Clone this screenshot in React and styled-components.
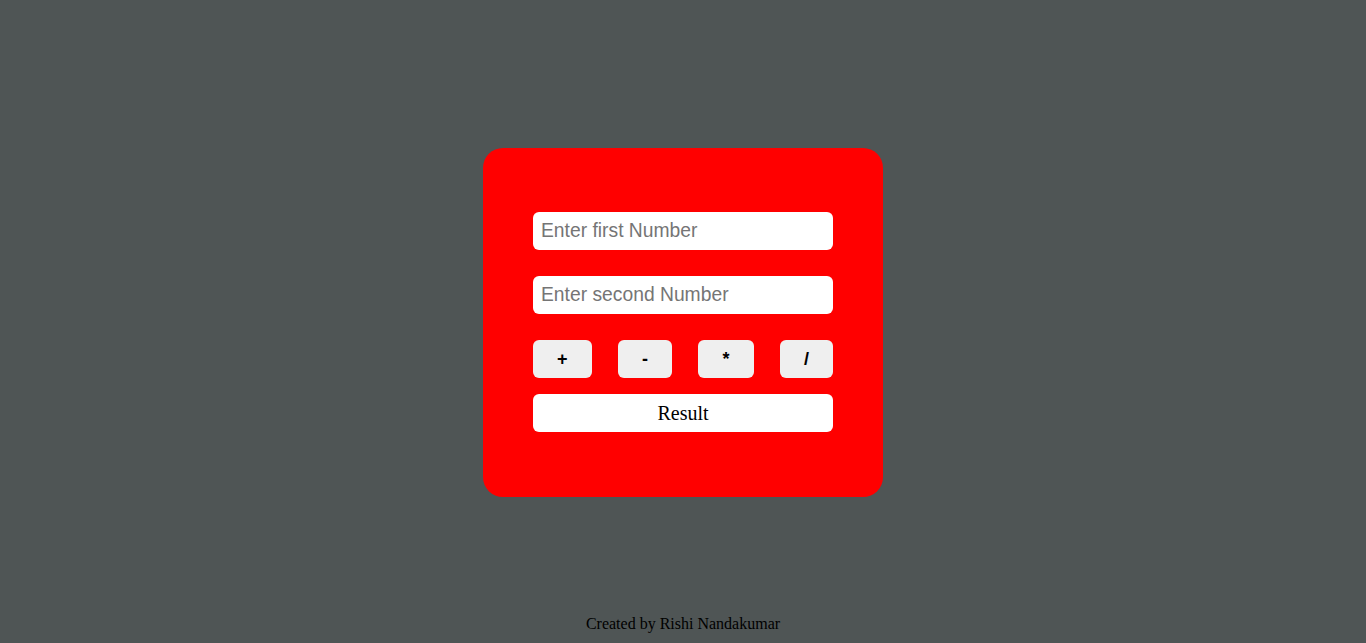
import React, { useState } from 'react';
import styled, { createGlobalStyle } from 'styled-components';

const GlobalStyle = createGlobalStyle`
  html, body {
    margin: 0;
    padding: 0;
    height: 100%;
  }
  body {
    background: #4f5555;
    font-family: "Liberation Serif", "Times New Roman", serif;
  }
`;

const Page = styled.div`
  height: 643px;
  box-sizing: border-box;
  padding-top: 2px;
  display: flex;
  flex-direction: column;
  align-items: center;
  justify-content: center;
  position: relative;
`;

const Card = styled.div`
  width: 400px;
  height: 349px;
  box-sizing: border-box;
  padding: 64px 50px;
  background: #ff0000;
  border-radius: 20px;
  display: flex;
  flex-direction: column;
`;

const Input = styled.input`
  width: 300px;
  height: 38px;
  box-sizing: border-box;
  border: none;
  border-radius: 6px;
  padding: 0 8px;
  margin-bottom: 26px;
  font-family: "Liberation Sans", Arial, sans-serif;
  font-size: 19.3px;
  outline: none;
  &::placeholder {
    color: #757575;
  }
`;

const OpRow = styled.div`
  display: flex;
  justify-content: space-between;
  margin-bottom: 16px;
`;

const OpButton = styled.button`
  height: 38px;
  padding: 0 24px;
  border: none;
  border-radius: 6px;
  background: #efefef;
  font-family: "Liberation Sans", Arial, sans-serif;
  font-weight: bold;
  font-size: 18px;
  color: #000;
  cursor: pointer;
`;

const Result = styled.div`
  height: 38px;
  border-radius: 6px;
  background: #fff;
  display: flex;
  align-items: center;
  justify-content: center;
  font-size: 20px;
  color: #000;
`;

const Footer = styled.div`
  position: absolute;
  bottom: 10px;
  left: 0;
  right: 0;
  text-align: center;
  font-size: 16px;
  color: #000;
`;

const App = () => {
  const [a, setA] = useState('');
  const [b, setB] = useState('');
  const [result, setResult] = useState('Result');

  const calc = (op) => {
    const x = parseFloat(a);
    const y = parseFloat(b);
    if (isNaN(x) || isNaN(y)) return;
    const r = { '+': x + y, '-': x - y, '*': x * y, '/': x / y }[op];
    setResult(String(r));
  };

  return (
    <Page>
      <GlobalStyle />
      <Card>
        <Input placeholder="Enter first Number" value={a} onChange={(e) => setA(e.target.value)} />
        <Input placeholder="Enter second Number" value={b} onChange={(e) => setB(e.target.value)} />
        <OpRow>
          {['+', '-', '*', '/'].map((op) => (
            <OpButton key={op} onClick={() => calc(op)}>
              {op}
            </OpButton>
          ))}
        </OpRow>
        <Result>{result}</Result>
      </Card>
      <Footer>Created by Rishi Nandakumar</Footer>
    </Page>
  );
};

export default App;
